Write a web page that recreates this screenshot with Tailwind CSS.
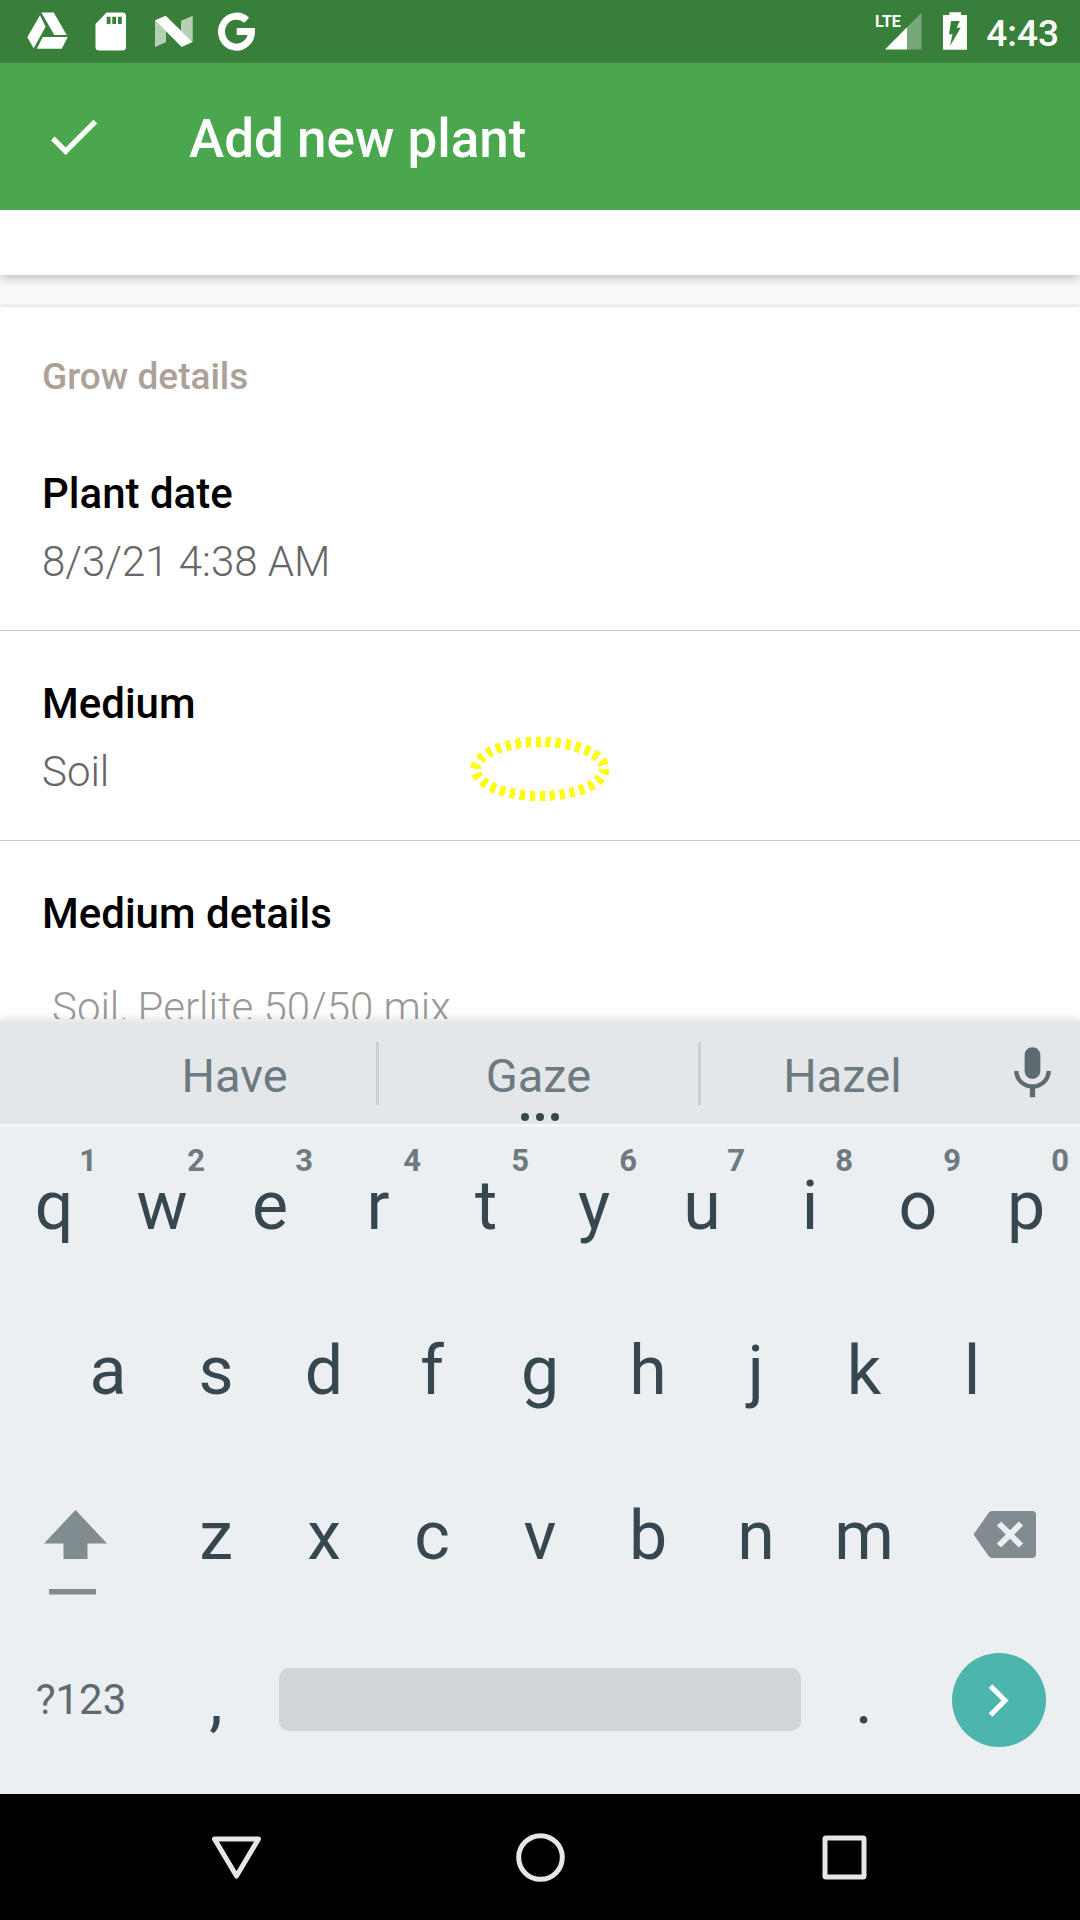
<!DOCTYPE html>
<html lang="en">
<head>
<meta charset="utf-8">
<meta name="viewport" content="width=device-width, initial-scale=1">
<title>Add new plant</title>
<script src="https://cdn.jsdelivr.net/npm/@tailwindcss/browser@4"></script>
</head>
<body class="flex h-screen flex-col overflow-hidden bg-[#fafafa] font-['Roboto',sans-serif]">

<!-- Status bar -->
<div class="flex h-[63px] shrink-0 items-center justify-between bg-[#387f3a] pr-[21px] pl-4 text-white">
  <div class="flex">
    <svg class="size-[63px]" viewBox="16 0 63 63" fill="currentColor" aria-label="Drive"><path d="M40 15.3 45.6 26.7 33.7 48.2 27.3 37.3zM41.3 12.5H53.7L66.7 35H54.3zM42.7 37H67.8L61.7 48.8H36.8z"/></svg>
    <svg class="size-[63px]" viewBox="79 0 63 63" fill="currentColor" fill-rule="evenodd" aria-label="SD card"><path d="M106.500 12.500H122.500a3.500 3.500 0 0 1 3.500 3.500V47a3.500 3.500 0 0 1-3.500 3.500H99a3.500 3.500 0 0 1-3.500-3.500V24zM106.700 16.700V24h3.800v-7.300zM112.300 16.700V24h3.800v-7.300zM118 16.700V24h3.800v-7.300z"/></svg>
    <svg class="size-[63px]" viewBox="142 0 63 63" fill="currentColor" aria-label="Android N"><path opacity=".63" d="M155 20.300 166 31V42.300L155 47zM181 20.700 192.700 15.700V42L181 31z"/><path d="M155 20.300 165.700 15.700 192.500 42 181.700 47z"/></svg>
    <svg class="size-[63px]" viewBox="205 0 63 63" fill="none" stroke="currentColor" stroke-width="7" aria-label="Google"><path d="M246.600 20.200A15 15.500 0 1 0 251.500 31.500H236.700"/></svg>
  </div>
  <div class="flex items-center">
    <svg class="h-[63px] w-[54px]" viewBox="873 0 54 63" fill="currentColor" aria-label="LTE signal"><text x="875" y="27" font-size="16" font-weight="700" font-family="Roboto, sans-serif">LTE</text><path d="M885 49.500 907 27.300V49.500z"/><path opacity=".32" d="M907 27.300 921.500 12.700V49.500H907z"/></svg>
    <svg class="h-[63px] w-14" viewBox="927 0 56 63" fill="currentColor" fill-rule="evenodd" aria-label="Battery charging"><path d="M949.300 12.300H961V15H967V49.700H943V15H949.300zM951 21 949 34.300H952.500L950 46 960.700 27.700H956.700L959.700 21z"/></svg>
    <time class="pt-1 pl-[3px] text-[37px] leading-[48px] font-medium">4:43</time>
  </div>
</div>

<!-- App bar -->
<header class="flex h-[147px] shrink-0 items-center bg-[#4ba74d] pl-[42px] text-white">
  <button type="button" aria-label="Save" class="mr-21 size-[63px]"><svg class="size-full" viewBox="0 0 24 24" fill="currentColor"><path d="M9 16.170 4.830 12 3.410 13.410 9 19 21 7 19.590 5.590z"/></svg></button>
  <h1 class="pt-1 text-[53px] leading-[64px] font-medium">Add new plant</h1>
</header>

<!-- Form -->
<main class="flex min-h-0 flex-1 flex-col gap-8 overflow-hidden">
  <div class="h-[65px] shrink-0 bg-white shadow-[0_3px_10px_rgba(0,0,0,0.25)]"></div>
  <section class="shrink-0 bg-white pt-[46px] shadow-[0_1px_6px_rgba(0,0,0,0.25)]">
    <h2 class="px-[42px] pb-5 text-[37px] leading-[48px] font-medium text-[#aca199]">Grow details</h2>
    <button type="button" class="block w-full border-b border-[#c8c8c8] px-[42px] pt-[39px] pb-[34px] text-left text-[42px] leading-[68px]">
      <span class="block font-medium text-black">Plant date</span>
      <span class="block font-light text-[#666]">8/3/21 4:38 AM</span>
    </button>
    <button type="button" class="relative block w-full border-b border-[#c8c8c8] px-[42px] pt-[39px] pb-[34px] text-left text-[42px] leading-[68px]">
      <span class="block font-medium text-black">Medium</span>
      <span class="block font-light text-[#666]">Soil</span>
      <svg class="pointer-events-none absolute top-[106px] left-1/2 h-16 w-[140px] -translate-x-1/2" viewBox="0 0 140 64" fill="none" stroke="#ff0" stroke-width="10" stroke-dasharray="5 5" shape-rendering="crispEdges"><ellipse cx="70" cy="32" rx="64.500" ry="27"/></svg>
    </button>
    <div class="px-[42px] pt-[39px] text-[42px]">
      <label for="medium-details" class="block leading-[68px] font-medium text-black">Medium details</label>
      <input id="medium-details" type="text" placeholder="Soil, Perlite 50/50 mix" class="mt-8 block h-14 w-full px-[10px] leading-[56px] font-light text-[#666] outline-none placeholder:text-[#999]">
    </div>
  </section>
</main>

<!-- Keyboard -->
<div class="relative shrink-0 border-t-[3px] border-[#e9ebec] bg-[#ebeff2] pb-[10px] text-[68px] text-[#37474f] shadow-[0_0_10px_rgba(0,0,0,0.12)]">
  <div class="relative flex h-[102px] items-center bg-[#e3e7ea] pl-[93px] text-[47px] text-[#6e7a80]">
    <button type="button" class="flex-8 pt-[6px] leading-[56px]">Have</button>
    <div class="h-[63px] w-[3px] bg-[#cacfd2]"></div>
    <button type="button" class="flex-9 pt-[6px] leading-[56px]">Gaze</button>
    <div class="h-[63px] w-[3px] bg-[#cacfd2]"></div>
    <button type="button" class="flex-8 pt-[6px] leading-[56px]">Hazel</button>
    <button type="button" aria-label="Voice input" class="flex w-24 justify-center text-[#5d6b71]"><svg class="size-[63px]" viewBox="0 0 24 24" fill="currentColor"><path d="M12 14c1.660 0 2.990-1.340 2.990-3L15 5c0-1.660-1.340-3-3-3S9 3.340 9 5v6c0 1.660 1.340 3 3 3zm5.300-3c0 3-2.540 5.100-5.300 5.100S6.700 14 6.700 11H5c0 3.410 2.720 6.230 6 6.720V21h2v-3.280c3.280-.48 6-3.300 6-6.720h-1.700z"/></svg></button>
    <div class="absolute bottom-[3px] left-1/2 flex -translate-x-1/2 gap-[7px]"><i class="size-2 rounded-full bg-[#37474f]"></i><i class="size-2 rounded-full bg-[#37474f]"></i><i class="size-2 rounded-full bg-[#37474f]"></i></div>
  </div>

  <div class="grid h-[164px] grid-cols-10 shadow-[inset_0_3px_0_#f4f6f8] [&_sup]:absolute [&_sup]:top-[21px] [&_sup]:right-[11px] [&_sup]:text-[31px] [&_sup]:leading-8 [&_sup]:font-bold [&_sup]:text-[#6e7a80] [&>button]:relative">
    <button type="button">q<sup>1</sup></button>
    <button type="button">w<sup>2</sup></button>
    <button type="button">e<sup>3</sup></button>
    <button type="button">r<sup>4</sup></button>
    <button type="button">t<sup>5</sup></button>
    <button type="button">y<sup>6</sup></button>
    <button type="button">u<sup>7</sup></button>
    <button type="button">i<sup>8</sup></button>
    <button type="button">o<sup>9</sup></button>
    <button type="button">p<sup>0</sup></button>
  </div>

  <div class="grid h-[165px] grid-cols-9 px-[5%]">
    <button type="button">a</button>
    <button type="button">s</button>
    <button type="button">d</button>
    <button type="button">f</button>
    <button type="button">g</button>
    <button type="button">h</button>
    <button type="button">j</button>
    <button type="button">k</button>
    <button type="button">l</button>
  </div>

  <div class="grid h-[165px] grid-cols-20 [&>button]:col-span-2">
    <button type="button" aria-label="Shift" class="col-span-3! text-[#818c90]"><svg class="h-[165px] w-full" viewBox="0 0 162 165" fill="currentColor"><path d="M75.500 57 107 90.500H87.500V106H63.500V90.500H44zM49 136H96v5.500H49z"/></svg></button>
    <button type="button">z</button>
    <button type="button">x</button>
    <button type="button">c</button>
    <button type="button">v</button>
    <button type="button">b</button>
    <button type="button">n</button>
    <button type="button">m</button>
    <button type="button" aria-label="Backspace" class="col-span-3! text-[#818c90]"><svg class="h-[165px] w-full" viewBox="0 -1 162 165"><path fill="currentColor" d="M74 57H114a4 4 0 0 1 4 4V100a4 4 0 0 1-4 4H74a4 4 0 0 1-3.300-1.700L55.500 80.500 70.700 58.700A4 4 0 0 1 74 57z"/><path stroke="#ebeff2" stroke-width="6" d="M81 69.500 103 91.500M103 69.500 81 91.500"/></svg></button>
  </div>

  <div class="grid h-[166px] grid-cols-20 items-center pb-[3px]">
    <button type="button" class="col-span-3 text-[42px] text-[#5d6b71]">?123</button>
    <button type="button" class="col-span-2">,</button>
    <button type="button" aria-label="Space" class="col-span-10 mx-[9px] h-[63px] rounded-[10px] bg-[#d1d6d9]"></button>
    <button type="button" class="col-span-2">.</button>
    <button type="button" aria-label="Next" class="col-span-3 size-[94px] justify-self-center rounded-full bg-[#4db6ac] text-white"><svg class="size-full" viewBox="0 0 94 94" fill="none" stroke="currentColor" stroke-width="5"><path d="M38.500 33 53 47.500 38.500 62"/></svg></button>
  </div>
</div>

<!-- Navigation bar -->
<nav class="relative grid h-[126px] shrink-0 grid-cols-3 items-center justify-items-center bg-black px-[84px] text-[#e6e6e6]">
  <button type="button" aria-label="Back" class="size-[63px]"><svg class="size-full" viewBox="0 0 63 63" fill="none" stroke="currentColor" stroke-width="5" stroke-linejoin="round"><path d="M9.500 13H53.500L31.500 50z"/></svg></button>
  <button type="button" aria-label="Home" class="size-[63px]"><svg class="size-full" viewBox="0 0 63 63" fill="none" stroke="currentColor" stroke-width="5"><circle cx="31.500" cy="31.500" r="21.800"/></svg></button>
  <button type="button" aria-label="Recents" class="size-[63px]"><svg class="size-full" viewBox="0 0 63 63" fill="none" stroke="currentColor" stroke-width="5"><rect x="12" y="12" width="39" height="39" rx="1"/></svg></button>
</nav>

</body>
</html>
